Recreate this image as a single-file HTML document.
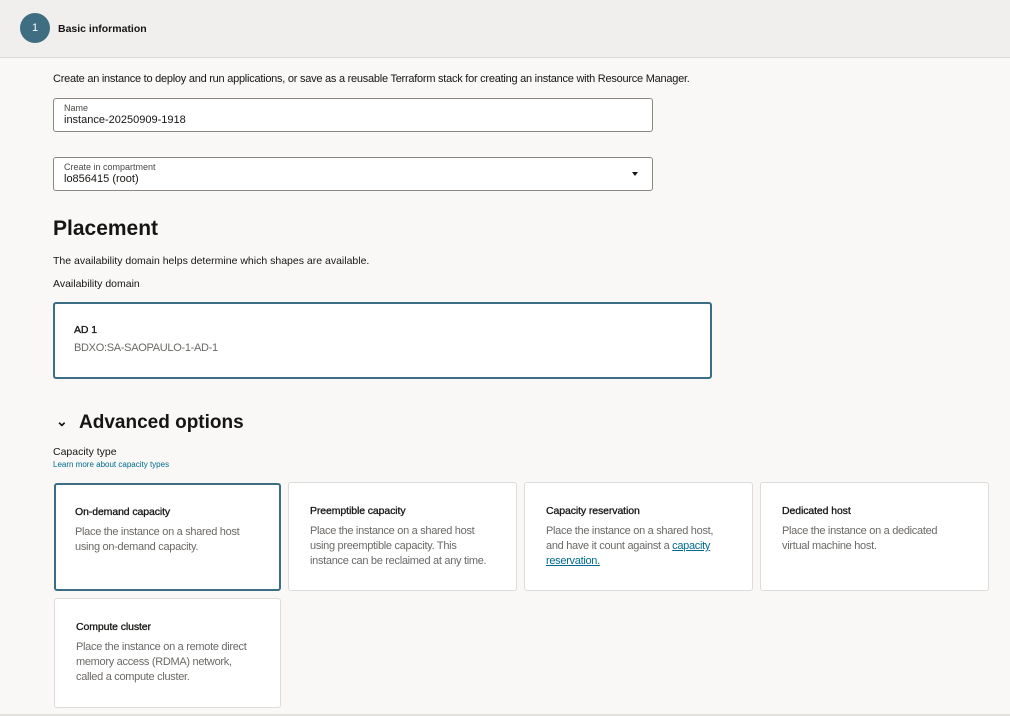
<!DOCTYPE html>
<html><head><style>
*{margin:0;padding:0;box-sizing:border-box}
body{width:1010px;height:716px;background:#f9f8f6;font-family:"Liberation Sans",sans-serif;color:#161513;position:relative;overflow:hidden}
.a{position:absolute;white-space:nowrap}
.hdr{position:absolute;left:0;top:0;width:1010px;height:58px;background:#f1efed;border-bottom:1px solid #dcdad7}
.circ{position:absolute;left:20px;top:13px;width:30px;height:30px;border-radius:50%;background:#3f6e82;color:#fff;font-size:11px;text-align:center;line-height:30px}
.inp{position:absolute;left:53px;width:600px;height:34px;background:#fff;border:1px solid #8a8785;border-radius:3px}
.inp .l{position:absolute;left:10px;top:4px;font-size:9px;color:#4a4846}
.inp .v{position:absolute;left:10px;top:15px;font-size:11px}
.card{position:absolute;background:#fff;border:1px solid #dedcda;border-radius:3px;padding:0 21px}
.card.sel{border:2px solid #3b6e84;padding:0 19px}
.card h4{font-size:10.5px;font-weight:normal;margin-top:22px;color:#161513;-webkit-text-stroke:0.3px #161513;letter-spacing:-0.1px}
.card.sel h4{margin-top:21px}
.card p{font-size:11px;color:#6b6966;line-height:15px;margin-top:7px;letter-spacing:-0.3px;width:180px}
a{color:#006b8f;text-decoration:underline}
</style></head><body>
<div class="hdr"></div>
<div class="circ">1</div>
<div class="a" style="left:58px;top:23px;font-size:10.5px;font-weight:bold">Basic information</div>
<div class="a" style="left:53px;top:73px;font-size:11px;letter-spacing:-0.25px">Create an instance to deploy and run applications, or save as a reusable Terraform stack for creating an instance with Resource Manager.</div>
<div class="inp" style="top:98px"><div class="l">Name</div><div class="v">instance-20250909-1918</div></div>
<div class="inp" style="top:157px"><div class="l">Create in compartment</div><div class="v">lo856415 (root)</div>
<div style="position:absolute;right:14px;top:14px;width:0;height:0;border-left:3.5px solid transparent;border-right:3.5px solid transparent;border-top:4px solid #161513"></div></div>
<div class="a" style="left:53px;top:217px;font-size:21px;font-weight:bold">Placement</div>
<div class="a" style="left:53px;top:255px;font-size:10.5px">The availability domain helps determine which shapes are available.</div>
<div class="a" style="left:53px;top:278px;font-size:10.5px">Availability domain</div>
<div class="card sel" style="left:53px;top:302px;width:659px;height:77px"><h4 style="margin-top:20px">AD 1</h4><p style="margin-top:5px;width:auto">BDXO:SA-SAOPAULO-1-AD-1</p></div>
<div class="a" style="left:56px;top:413px;font-size:14px;font-weight:bold">&#8964;</div>
<div class="a" style="left:79px;top:412px;font-size:19px;font-weight:bold">Advanced options</div>
<div class="a" style="left:53px;top:446px;font-size:10.5px">Capacity type</div>
<div class="a" style="left:53px;top:460px;font-size:8px;color:#006b8f">Learn more about capacity types</div>
<div class="card sel" style="left:54px;top:483px;width:227px;height:108px"><h4>On-demand capacity</h4><p>Place the instance on a shared host using on-demand capacity.</p></div>
<div class="card" style="left:288px;top:482px;width:229px;height:109px"><h4>Preemptible capacity</h4><p>Place the instance on a shared host using preemptible capacity. This instance can be reclaimed at any time.</p></div>
<div class="card" style="left:524px;top:482px;width:229px;height:109px"><h4>Capacity reservation</h4><p>Place the instance on a shared host, and have it count against a <a>capacity reservation.</a></p></div>
<div class="card" style="left:760px;top:482px;width:229px;height:109px"><h4>Dedicated host</h4><p>Place the instance on a dedicated virtual machine host.</p></div>
<div class="card" style="left:54px;top:598px;width:227px;height:110px"><h4>Compute cluster</h4><p>Place the instance on a remote direct memory access (RDMA) network, called a compute cluster.</p></div>
<div style="position:absolute;left:0;top:714px;width:1010px;height:2px;background:#e4e2df"></div>
</body></html>
